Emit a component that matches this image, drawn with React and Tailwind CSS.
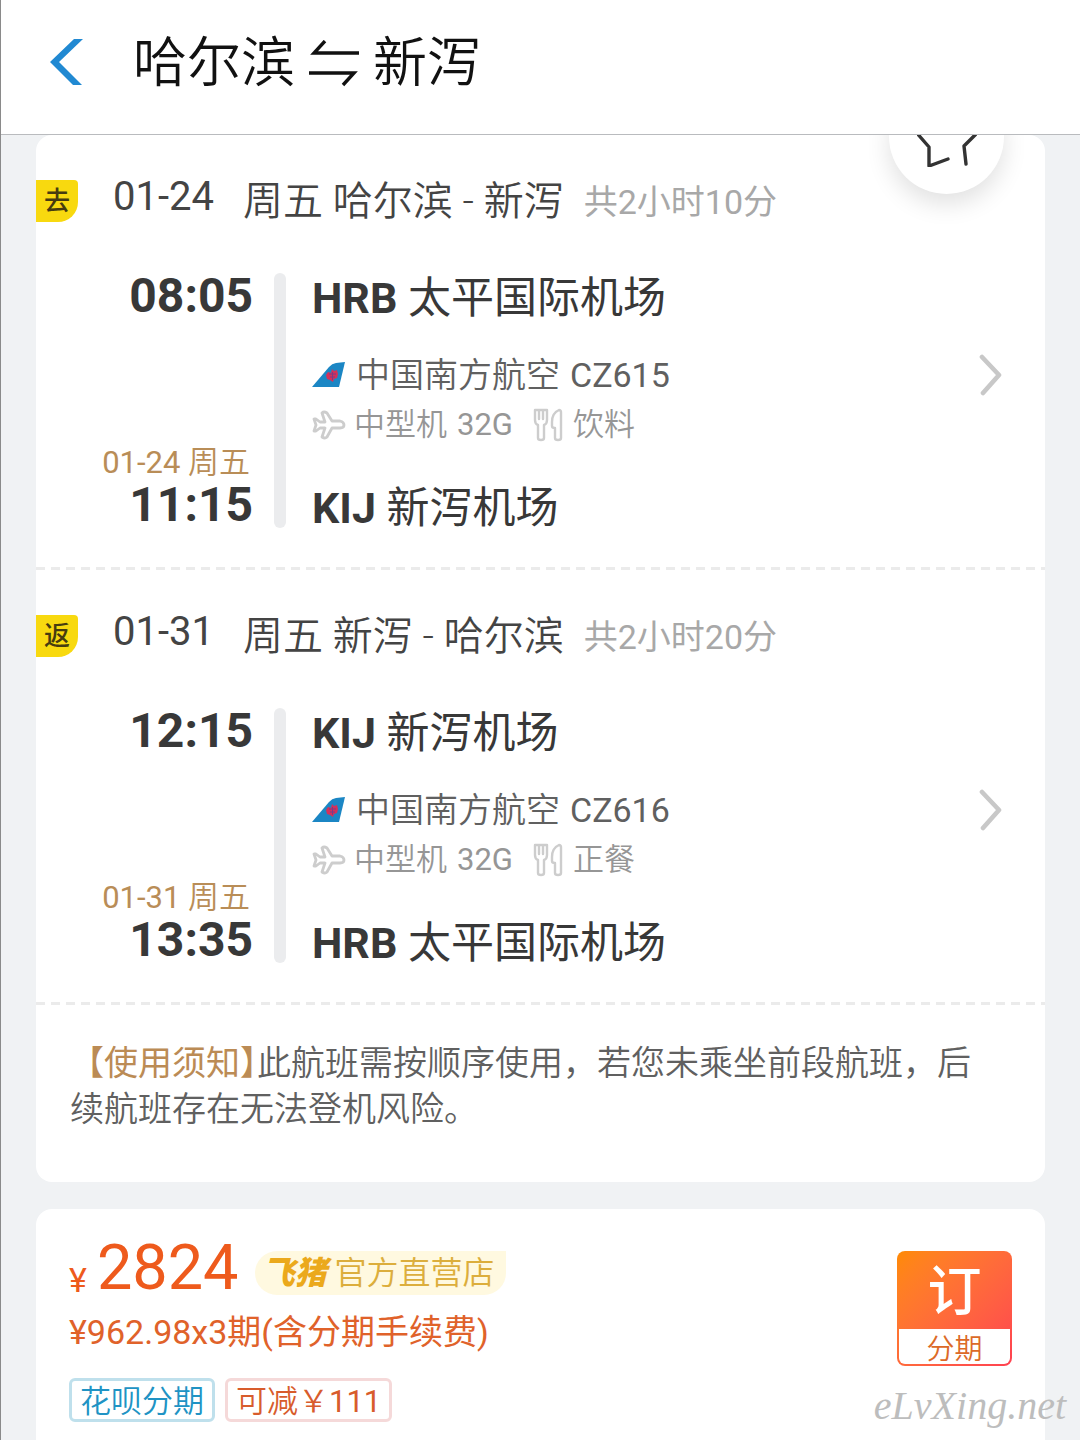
const flights = [
    {
        tag: "去",
        date: "01-24",
        weekday: "周五",
        route: "哈尔滨 - 新泻",
        duration: "共2小时10分",
        departTime: "08:05",
        departAirport: "太平国际机场",
        departCode: "HRB",
        arriveTime: "11:15",
        arriveAirport: "新泻机场",
        arriveCode: "KIJ",
        airline: "中国南方航空",
        flightNo: "CZ615",
        plane: "中型机",
        planeCode: "32G",
        meal: "饮料",
    },
    {
        tag: "返",
        date: "01-31",
        weekday: "周五",
        route: "新泻 - 哈尔滨",
        duration: "共2小时20分",
        departTime: "12:15",
        departAirport: "新泻机场",
        departCode: "KIJ",
        arriveTime: "13:35",
        arriveAirport: "太平国际机场",
        arriveCode: "HRB",
        airline: "中国南方航空",
        flightNo: "CZ616",
        plane: "中型机",
        planeCode: "32G",
        meal: "正餐",
    },
];

function SwapArrows() {
    return (
        <svg className="w-[50px] h-[48px]" viewBox="0 0 50 48" fill="none" stroke="#111" strokeWidth="3.4">
            <path d="M50 13H5L16 1" />
            <path d="M0 33H45L34 45" />
        </svg>
    );
}

function AirlineLogo() {
    return (
        <svg className="w-[34px] h-[26px]" viewBox="0 0 34 26">
            <path d="M0 25L17 5Q20 1.5 24 1L33 0L27 25Z" fill="#1b86c4" />
            <path d="M20 7l2 2 3-1 1 4-1 4-3 1-1 3-3-2-3-1-1-4 2-3 3 1z" fill="#d5305a" />
            <path d="M17 12h7M18 15h5M20.5 10v8" stroke="#7a3c86" strokeWidth="1" />
        </svg>
    );
}

function PlaneIcon() {
    return (
        <svg className="w-[34px] h-[30px]" viewBox="0 0 34 30" fill="none" stroke="#cdcdcd" strokeWidth="2.8" strokeLinejoin="round">
            <path d="M10 3Q12 1 15 3L20 11H28Q32 12 32 15T28 18H20L15 27Q13 29 10 27L13 18H8L4 21H2L4 15L2 9H4L8 12H13Z" />
        </svg>
    );
}

function MealIcon() {
    return (
        <svg className="w-[30px] h-[34px]" viewBox="0 0 30 34" fill="none" stroke="#cdcdcd" strokeWidth="2.4" strokeLinejoin="round" strokeLinecap="round">
            <path d="M2 2H14V12Q14 16 11 17V30Q11 32 8 32T5 30V17Q2 16 2 12Z" />
            <path d="M6 3V11M10 3V11" />
            <path d="M28 4Q28 2 26 2Q19 5 19 14V18Q19 20 22 20V30Q22 32 25 32T28 30Z" />
        </svg>
    );
}

function Chevron() {
    return (
        <svg className="w-[24px] h-[44px]" viewBox="0 0 24 44" fill="none" stroke="#c8c8c8" strokeWidth="4.6" strokeLinecap="round" strokeLinejoin="round">
            <path d="M3 4L20 22L4 40" />
        </svg>
    );
}

function Airport({ code, name }) {
    return (
        <div className="text-[43px] leading-[50px] font-normal text-[#383838]">
            <span className="font-bold">{code}</span> {name}
        </div>
    );
}

function DashedLine() {
    return (
        <div className="h-[3px] bg-[repeating-linear-gradient(90deg,#ebebeb_0_9px,transparent_9px_15px)]" />
    );
}

function Flight({ flight }) {
    return (
        <section>
            <div className="flex items-start h-[48px] mt-[45px] mb-[45px] whitespace-nowrap">
                <span className="w-[42px] h-[42px] mr-[35px] rounded-br-[20px] rounded-tr-sm bg-[#f8d90f] text-center text-[26px] leading-[42px] font-medium text-[#463c10]">
                    {flight.tag}
                </span>
                <span className="w-[130px] text-[40px] leading-[34px] font-normal text-[#444]">{flight.date}</span>
                <span className="text-[40px] leading-[44px] text-[#444]">
                    {flight.weekday} {flight.route}
                </span>
                <span className="ml-5 text-[34px] leading-[44px] font-normal text-[#a8a8a8]">{flight.duration}</span>
            </div>
            <div className="flex">
                <div className="w-[217px] h-[255px] flex flex-col justify-between text-right">
                    <time className="text-[48px] leading-[46px] font-bold text-[#383838]">{flight.departTime}</time>
                    <div>
                        <div className="mr-[3px] text-[31px] leading-[38px] text-[#b98d57]">
                            <span className="font-normal">{flight.date}</span> {flight.weekday}
                        </div>
                        <time className="block text-[48px] leading-[46px] font-bold text-[#383838]">{flight.arriveTime}</time>
                    </div>
                </div>
                <div className="w-[12px] h-[255px] ml-[21px] mr-[26px] rounded-full bg-[#ebecee]" />
                <div className="flex-1 pr-[42px]">
                    <Airport code={flight.departCode} name={flight.departAirport} />
                    <div className="flex items-center mt-[27px] text-[34px] leading-[50px] text-[#606060]">
                        <AirlineLogo />
                        <span className="ml-2.5 mr-[10px]">{flight.airline}</span>
                        <span className="font-normal">{flight.flightNo}</span>
                        <button className="ml-auto" aria-label="航班详情">
                            <Chevron />
                        </button>
                    </div>
                    <div className="flex items-center mb-[34px] text-[31px] leading-[49px] text-[#969696]">
                        <PlaneIcon />
                        <span className="ml-2 mr-[10px]">{flight.plane}</span>
                        <span className="mr-5 font-normal">{flight.planeCode}</span>
                        <MealIcon />
                        <span className="ml-2.5">{flight.meal}</span>
                    </div>
                    <Airport code={flight.arriveCode} name={flight.arriveAirport} />
                </div>
            </div>
            <div className="mt-[34px]">
                <DashedLine />
            </div>
        </section>
    );
}

export default function App() {
    return (
        <div className="relative min-h-screen flex flex-col border-l border-[#8a8a8a] bg-[#f0f2f4] font-['Roboto','Noto_Sans_CJK_SC',sans-serif] font-[350]">
            <header className="flex items-center h-[135px] pl-[49px] pb-[6px] border-b border-[#b9bbbe] bg-white">
                <button aria-label="返回">
                    <svg className="w-[34px] h-[50px]" viewBox="0 0 34 50" fill="#2189d2">
                        <path d="M24 0H33L9 23L32 46H23L0 23Z" />
                    </svg>
                </button>
                <h1 className="flex items-center gap-[14px] ml-[49px] text-[54px] leading-[60px] font-[350] text-[#111]">
                    哈尔滨
                    <SwapArrows />
                    新泻
                </h1>
            </header>

            <main className="relative flex-1 flex flex-col gap-[27px] px-[35px] overflow-hidden">
                <article className="flow-root rounded-2xl bg-white">
                    {flights.map((flight) => (
                        <Flight key={flight.tag} flight={flight} />
                    ))}
                    <p className="pt-[35px] pb-[50px] pl-[34px] pr-[50px] text-[34px] leading-[46px] text-[#606060]">
                        <span className="font-normal text-[#bb8b55]">【使用须知</span>
                        <span className="font-normal text-[#bb8b55] [font-feature-settings:'halt']">】</span>
                        此航班需按顺序使用，若您未乘坐前段航班，后续航班存在无法登机风险。
                    </p>
                </article>

                <article className="flex-1 flex justify-between items-start rounded-t-2xl bg-white pt-[26px] pb-[16px] pl-[33px] pr-[33px]">
                    <div>
                        <div className="flex items-center font-normal text-[#ee5a1c]">
                            <span className="mt-[24px] mr-[10px] text-[34px] leading-[40px]">¥</span>
                            <span className="text-[63px] leading-[66px]">2824</span>
                            <span className="flex items-center h-[44px] ml-[16px] mt-[10px] pl-2 pr-[11px] rounded-l-full rounded-br-full bg-[#fff9e0] text-[32px] leading-[48px] font-[350] text-[#dcae3c]">
                                <b className="mr-2 italic font-black text-[#eba91c]">飞猪</b>
                                官方直营店
                            </span>
                        </div>
                        <div className="mt-[8px] text-[34px] leading-[46px] font-normal text-[#e0622a]">¥962.98x3期(含分期手续费)</div>
                        <div className="flex gap-[10px] mt-[23px] text-[31px] leading-[42px]">
                            <span className="h-[44px] px-[8px] border-3 border-[#bfe0ec] rounded-md text-[#2093c4]">花呗分期</span>
                            <span className="h-[44px] px-[8px] border-3 border-[#f5d9d9] rounded-md text-[#d85c2c]">
                                可减￥<span className="font-normal">111</span>
                            </span>
                        </div>
                    </div>
                    <button className="mt-[16px] w-[115px] rounded-lg p-[2px] bg-linear-to-br from-[#ff8a00] to-[#ff4050]">
                        <span className="block h-[76px] text-[54px] leading-[80px] font-medium text-white">订</span>
                        <span className="block h-[35px] rounded-b-md bg-white text-[28px] leading-[42px] text-[#dc6a28]">分期</span>
                    </button>
                </article>

                {/* favourite button, half scrolled under the header */}
                <button
                    aria-label="收藏"
                    className="absolute right-[76px] -top-[56px] size-[115px] flex items-center justify-center rounded-full bg-white shadow-[0_10px_24px_rgba(0,0,0,0.12)]"
                >
                    <svg className="w-[60px] h-[60px]" viewBox="0 0 60 60" fill="none" stroke="#333" strokeWidth="3.4" strokeLinecap="round" strokeLinejoin="round">
                        <path d="M30 2L38 20L62 24L47 39L49 57M31 52L12 59L12 40L-2 24L22 20L30 2" />
                    </svg>
                </button>
            </main>

            <span className="absolute right-[14px] bottom-[10px] font-['Liberation_Serif',serif] italic font-normal text-[40px] leading-[48px] text-[#bdbdbd]">
                eLvXing.net
            </span>
        </div>
    );
}
